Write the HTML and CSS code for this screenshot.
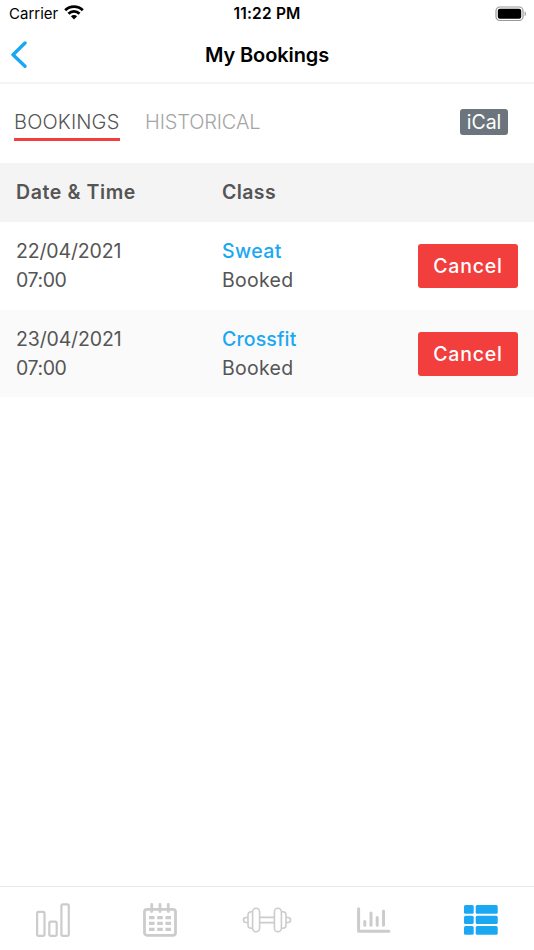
FILE: index.html
```html
<!DOCTYPE html>
<html lang="en">
<head>
  <meta charset="UTF-8" />
  <meta name="viewport" content="width=device-width, initial-scale=1.0" />
  <title>My Bookings</title>
  <link rel="stylesheet" href="styles.css">
</head>
<body>
  <div class="status-bar">
    <div class="carrier">
      <span>Carrier</span>
      <svg width="20" height="15" viewBox="0 0 20 15" fill="none" stroke="#000" stroke-width="2.8">
        <path d="M1.2 5.2a12.4 12.4 0 0 1 17.6 0" />
        <path d="M4.5 8.7a7.7 7.7 0 0 1 11 0" />
        <path d="M10 14.4l-3.1-3.1a4.3 4.3 0 0 1 6.2 0z" fill="#000" stroke="none" />
      </svg>
    </div>
    <span class="time">11:22 PM</span>
    <svg class="battery" width="32" height="16" viewBox="0 0 32 16">
      <rect x="1" y="1" width="27" height="13.5" rx="3.8" fill="none" stroke="#999" stroke-width="1.2" />
      <rect x="2.8" y="2.8" width="23.4" height="9.9" rx="2" />
      <path d="M29.6 5.3c1.8.7 1.8 4.2 0 4.9z" fill="#999" />
    </svg>
  </div>

  <header class="navbar">
    <a href="#" class="back" aria-label="Back">
      <svg width="18" height="28" viewBox="0 0 18 28" fill="none" stroke="#1ba8f3" stroke-width="3.4" stroke-linecap="round" stroke-linejoin="round">
        <path d="M15 2L3 13.7l12 11.6" />
      </svg>
    </a>
    <h1>My Bookings</h1>
  </header>

  <main>
    <div class="tabs">
      <a href="#" class="tab active">BOOKINGS</a>
      <a href="#" class="tab historical">HISTORICAL</a>
      <a href="#" class="ical">iCal</a>
    </div>

    <div class="bookings">
      <div class="row head">
        <span class="date-head">Date &amp; Time</span>
        <span class="class-head">Class</span>
      </div>
      <div class="row">
        <div><p class="date">22/04/2021</p><p class="hour">07:00</p></div>
        <div><a href="#" class="sweat">Sweat</a><p class="state">Booked</p></div>
        <button>Cancel</button>
      </div>
      <div class="row alt">
        <div><p class="date">23/04/2021</p><p class="hour">07:00</p></div>
        <div><a href="#" class="crossfit">Crossfit</a><p class="state">Booked</p></div>
        <button>Cancel</button>
      </div>
    </div>
  </main>

  <nav class="tabbar">
    <a href="#" aria-label="Results">
      <svg width="34" height="34" viewBox="0 0 34 34" fill="none" stroke="#ccc" stroke-width="2.2">
        <rect x="1.1" y="8.8" width="7.4" height="24" rx="1.6" />
        <rect x="13.3" y="18.6" width="7.4" height="14.2" rx="1.6" />
        <rect x="25.4" y="1.3" width="7.4" height="31.5" rx="1.6" />
      </svg>
    </a>
    <a href="#" aria-label="Calendar">
      <svg width="34" height="34" viewBox="0 0 34 34" fill="#ccc">
        <rect x="1.5" y="6.3" width="31" height="26" rx="2.5" fill="none" stroke="#ccc" stroke-width="2.8" />
        <path d="M8.7 1.5v7M17 1.5v7M25.3 1.5v7" stroke="#ccc" stroke-width="2.8" stroke-linecap="round" />
        <path d="M6 13h5.5v3.2H6zM14.2 13h5.6v3.2h-5.6zM22.5 13H28v3.2h-5.5zM6 18.8h5.5V22H6zM14.2 18.8h5.6V22h-5.6zM22.5 18.8H28V22h-5.5zM6 24.7h5.5v3.2H6zM14.2 24.7h5.6v3.2h-5.6zM22.5 24.7H28v3.2h-5.5z" />
      </svg>
    </a>
    <a href="#" aria-label="Workouts">
      <svg width="50" height="26" viewBox="0 0 50 26" fill="none" stroke="#ccc" stroke-width="1.6">
        <rect x="10.6" y="1.3" width="7" height="23.4" rx="3.5" />
        <rect x="32.4" y="1.3" width="7" height="23.4" rx="3.5" />
        <path d="M10.6 4.7H9a3 3 0 0 0-3 3v10.6a3 3 0 0 0 3 3h1.6M39.4 4.7H41a3 3 0 0 1 3 3v10.6a3 3 0 0 1-3 3h-1.6" />
        <path d="M6 10.5H4a2.5 2.5 0 0 0 0 5h2M44 10.5h2a2.5 2.5 0 0 1 0 5h-2M17.6 10.4h14.8M17.6 15.6h14.8" />
      </svg>
    </a>
    <a href="#" aria-label="Statistics">
      <svg width="34" height="26" viewBox="0 0 34 26" fill="none" stroke="#ccc" stroke-width="3" stroke-linecap="round" stroke-linejoin="round">
        <path d="M1.6 1.7v22.6h30.3M7.8 14.5v3.7M14 6v12.2M20.2 10.5v7.7M26.5 4v14.2" />
      </svg>
    </a>
    <a href="#" aria-label="My bookings">
      <svg width="34" height="30" viewBox="0 0 34 30" fill="#1ba8f3">
        <rect x="0" y="0" width="9.7" height="8.7" rx="1.5" /><rect x="11.7" y="0" width="22" height="8.7" rx="1.5" />
        <rect x="0" y="10.7" width="9.7" height="8.3" rx="1.5" /><rect x="11.7" y="10.7" width="22" height="8.3" rx="1.5" />
        <rect x="0" y="21" width="9.7" height="8.7" rx="1.5" /><rect x="11.7" y="21" width="22" height="8.7" rx="1.5" />
      </svg>
    </a>
  </nav>
</body>
</html>
```
FILE: styles.css
```css
* { box-sizing: border-box; margin: 0; padding: 0; }
body {
  font-family: 'Inter', sans-serif;
  font-size: 19.5px;
  color: #555;
  background: #fff;
  height: 100vh;
  display: flex; flex-direction: column;
}
a { color: inherit; text-decoration: none; }
svg { display: block; }

.status-bar {
  display: grid; grid-template-columns: 1fr auto 1fr; align-items: center;
  height: 27px; padding: 0 7px 0 9px;
  color: #000; font-size: 15px;
}
.carrier { display: flex; align-items: center; gap: 6px; }
.carrier svg { margin-top: -2px; }
.time { font-size: 15.5px; font-weight: 600; letter-spacing: 0.2px; margin-left: -2px; }
.battery { justify-self: end; }

.navbar {
  display: grid; grid-template-columns: 30px 1fr 30px; align-items: center;
  height: 57px; padding: 0 10px;
  border-bottom: 2px solid #f4f4f4;
}
.navbar h1 { color: #000; font-size: 20px; font-weight: 600; letter-spacing: -0.1px; text-align: center; }

main { flex: 1; }
.tabs { display: flex; align-items: flex-start; height: 79px; padding: 25px 26px 0 14px; }
.tab { height: 32px; line-height: 27px; font-size: 20px; font-weight: 300; color: #a5a5a5; }
.tab.active { width: 106px; color: #555; letter-spacing: 0.15px; border-bottom: 3px solid #f23e3c; }
.historical { margin-left: 25px; letter-spacing: -0.15px; }
.ical {
  width: 48px; height: 26px; line-height: 26px; margin-left: auto;
  border-radius: 3px; background: #6c757d; color: #fff; text-align: center;
}

.row {
  display: grid; grid-template-columns: 206px 1fr 100px; align-items: center;
  height: 87.7px; padding: 0 16px;
  line-height: 28.5px;
}
.row.head { height: 59px; background: #f4f4f4; font-weight: 600; }
.date-head { letter-spacing: 0.6px; }
.class-head { letter-spacing: 0.4px; }
.row.alt { background: #fafafa; }
.row a { display: block; color: #1ba8f3; font-weight: 500; }
.date { letter-spacing: -0.15px; }
.hour { letter-spacing: -0.4px; }
.sweat { letter-spacing: 0.4px; }
.crossfit { letter-spacing: 0.15px; }
.state { letter-spacing: 0.3px; }
button {
  height: 44px; border: none; border-radius: 3px;
  background: #f23e3c; color: #fff;
  font: 500 19.5px 'Inter', sans-serif; letter-spacing: 0.8px;
}

.tabbar {
  display: grid; grid-template-columns: repeat(5, 1fr);
  height: 64px; border-top: 1px solid #e9e9e9;
}
.tabbar a { display: flex; align-items: center; justify-content: center; padding-top: 3px; }
```
